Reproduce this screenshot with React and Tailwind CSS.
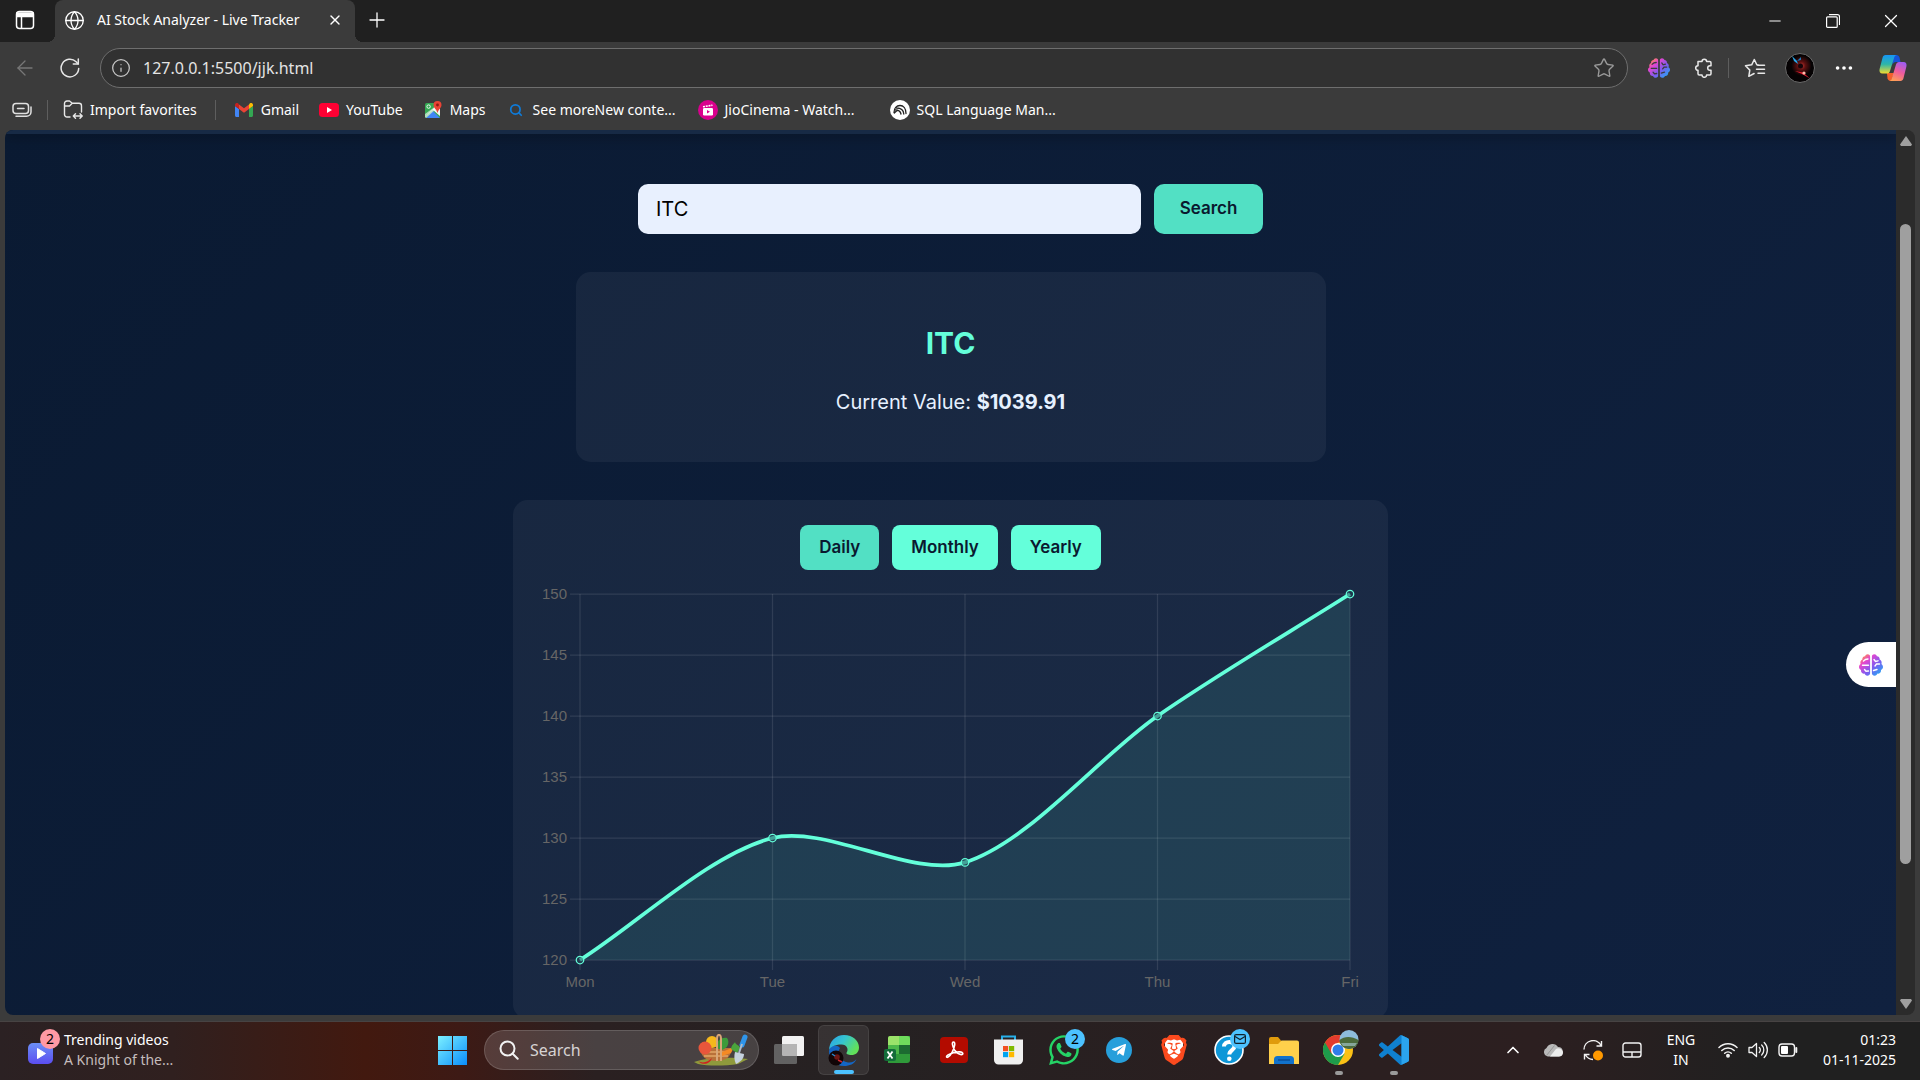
import { useState } from 'react';
import { ArrowLeft, ChevronUp, Ellipsis, Globe, Info, Minus, Plus, Search, Star, X } from 'lucide-react';
import { FaBrain, FaWhatsapp, FaTelegramPlane } from 'react-icons/fa';
import { SiBrave } from 'react-icons/si';

const ranges = {
  Daily: { labels: ['Mon', 'Tue', 'Wed', 'Thu', 'Fri'], values: [120, 130, 128, 140, 150] },
  Monthly: { labels: ['Jan', 'Feb', 'Mar', 'Apr', 'May'], values: [122, 126, 135, 131, 145] },
  Yearly: { labels: ['2021', '2022', '2023', '2024', '2025'], values: [120, 124, 138, 142, 149] },
};

/* ---------- chart ---------- */

const AREA = { left: 42, right: 812, top: 12, bottom: 378 };
const TICKS = [150, 145, 140, 135, 130, 125, 120];

const toY = (v) => AREA.bottom - ((v - 120) / 30) * (AREA.bottom - AREA.top);
const clampY = (y) => Math.min(AREA.bottom, Math.max(AREA.top, y));

function buildCurve(points, tension = 0.3) {
  const ctrl = points.map((p, i) => {
    const prev = points[i - 1] || p;
    const next = points[i + 1] || p;
    const d01 = Math.hypot(p.x - prev.x, p.y - prev.y);
    const d12 = Math.hypot(next.x - p.x, next.y - p.y);
    const a = (tension * d01) / (d01 + d12);
    const b = (tension * d12) / (d01 + d12);
    return {
      inX: p.x - a * (next.x - prev.x),
      inY: clampY(p.y - a * (next.y - prev.y)),
      outX: p.x + b * (next.x - prev.x),
      outY: clampY(p.y + b * (next.y - prev.y)),
    };
  });
  return points
    .map((p, i) => {
      if (i === 0) return `M${p.x} ${p.y}`;
      const c0 = ctrl[i - 1];
      const c1 = ctrl[i];
      return `C${c0.outX} ${c0.outY} ${c1.inX} ${c1.inY} ${p.x} ${p.y}`;
    })
    .join(' ');
}

function StockChart({ labels, values }) {
  const step = (AREA.right - AREA.left) / (values.length - 1);
  const points = values.map((v, i) => ({ x: AREA.left + i * step, y: toY(v) }));
  const line = buildCurve(points);

  return (
    <svg viewBox="0 0 825 412" className="w-full block mt-3" role="img" aria-label="Stock price chart">
      <g stroke="#ffffff" strokeOpacity="0.1" strokeWidth="1.25">
        {TICKS.map((t) => (
          <line key={t} x1={AREA.left - 10} x2={AREA.right} y1={toY(t)} y2={toY(t)} />
        ))}
        {points.map((p) => (
          <line key={p.x} x1={p.x} x2={p.x} y1={AREA.top} y2={AREA.bottom + 10} />
        ))}
      </g>
      <path d={`${line} L${AREA.right} ${AREA.bottom} L${AREA.left} ${AREA.bottom} Z`} fill="#64ffda" fillOpacity="0.1" />
      <path d={line} fill="none" stroke="#64ffda" strokeWidth="3.75" />
      {points.map((p) => (
        <circle key={p.x} cx={p.x} cy={p.y} r="3.75" fill="#1f4556" fillOpacity="0.5" stroke="#64ffda" strokeWidth="1.25" />
      ))}
      <g className="font-['Liberation_Sans',sans-serif] text-[15px]" fill="#666666">
        {TICKS.map((t) => (
          <text key={t} x="29" y={toY(t) + 5} textAnchor="end">{t}</text>
        ))}
        {points.map((p, i) => (
          <text key={p.x} x={p.x} y="405" textAnchor="middle">{labels[i]}</text>
        ))}
      </g>
    </svg>
  );
}

/* ---------- browser icons ---------- */

function BrainIcon({ className }) {
  return (
    <span className={className}>
      <svg width="0" height="0" className="absolute">
        <linearGradient id="brain" x1="0" y1="0" x2="1" y2="1">
          <stop offset="0.080" stopColor="#ff9a3c" />
          <stop offset="0.300" stopColor="#e545cf" />
          <stop offset="0.600" stopColor="#7d5cf0" />
          <stop offset="0.900" stopColor="#2aa4f4" />
        </linearGradient>
      </svg>
      <FaBrain className="size-full fill-[url(#brain)]" />
      <svg viewBox="0 0 24 24" className="absolute inset-0 size-full" fill="none" stroke="currentColor" strokeWidth="1.400" strokeLinecap="round">
        <path d="M12 2v20M3.500 12.300h6M4.500 8l2-1.500 2.500-.500M5.500 16.500l1.500 1.800 2.500-.300M20.500 11h-3l-1.500 2M15 6.500l1.500 2 2.500-.700M14.500 17.500l3.500-1" />
      </svg>
    </span>
  );
}

function TabActionsIcon() {
  return (
    <svg viewBox="0 0 20 20" className="size-5" fill="none" stroke="#fff" strokeWidth="1.5">
      <rect x="1.5" y="1.5" width="17" height="17" rx="3" />
      <path d="M2 3h16v3.500H2z" fill="#fff" />
      <path d="M6.500 6v12" />
    </svg>
  );
}

function ReloadIcon() {
  return (
    <svg viewBox="0 0 20 20" className="size-5" fill="none" stroke="#e6e6e6" strokeWidth="1.5" strokeLinecap="round">
      <path d="M18.700 10.500a8.800 8.800 0 1 1-2.600-6.700l1.900 1.900" />
      <path d="M18.300 1v5h-5" />
    </svg>
  );
}

function PuzzleIcon() {
  return (
    <svg viewBox="0 0 20 20" className="size-5" fill="none" stroke="#e8e8e8" strokeWidth="1.5" strokeLinejoin="round">
      <path d="M4 3.500h4a2.300 2.300 0 0 1 4.600 0h3.200a1.200 1.200 0 0 1 1.200 1.200v3h-1a2.300 2.300 0 0 0 0 4.600h1v3.500a1.200 1.200 0 0 1-1.200 1.200h-3.200a2.300 2.300 0 0 1-4.600 0H5.200A1.200 1.200 0 0 1 4 15.800v-3.500a2.300 2.300 0 0 1 0-4.600z" />
    </svg>
  );
}

function FavoritesIcon() {
  return (
    <svg viewBox="0 0 22 20" className="w-[22px] h-5" fill="none" stroke="#e8e8e8" strokeWidth="1.5" strokeLinecap="round" strokeLinejoin="round">
      <path d="M14 7 12.800 6.800 10.300 1.500 7.700 6.800 1.500 7.800l4.300 4.300-1 6.200 5.300-2.800" />
      <path d="M14 7.200h6.500M12.500 11.200h8M14 15.200h6.500" />
    </svg>
  );
}

function Avatar() {
  return (
    <svg viewBox="0 0 30 30" className="size-[30px]">
      <defs>
        <radialGradient id="avatarRed" cx="0.55" cy="0.42" r="0.35">
          <stop offset="0" stopColor="#c03430" />
          <stop offset="0.4" stopColor="#5b1010" />
          <stop offset="1" stopColor="#050203" />
        </radialGradient>
      </defs>
      <circle cx="15" cy="15" r="14.500" fill="url(#avatarRed)" stroke="#6b6b6b" />
      <path d="M7 3 12 8l1 3-4-3z" fill="#28a6e8" />
      <path d="m16 4-4 4 4-1z" fill="#1c78b8" />
      <path d="m10 18 8 1.500 7 6-8-4.500z" fill="#e31b30" />
      <circle cx="19" cy="20" r="1.600" fill="#ffb9a8" />
      <circle cx="15.500" cy="13" r="2.500" fill="#12060a" />
    </svg>
  );
}

function CopilotIcon() {
  return (
    <svg viewBox="0 0 28 26" className="w-7 h-[26px]">
      <defs>
        <linearGradient id="copA" x1="0" y1="0" x2="0" y2="1">
          <stop offset="0" stopColor="#1695f5" />
          <stop offset="0.5" stopColor="#2db6a8" />
          <stop offset="1" stopColor="#f2dc2f" />
        </linearGradient>
        <linearGradient id="copB" x1="0.700" y1="0" x2="0.300" y2="1">
          <stop offset="0" stopColor="#a05cf0" />
          <stop offset="0.5" stopColor="#ef5c9c" />
          <stop offset="1" stopColor="#ff9f55" />
        </linearGradient>
      </defs>
      <path d="M13 0h4.500c1.500 0 2.500 1 3 2.500L21.500 7H17c-2 0-3 1-3.500 3z" fill="#1553d8" />
      <path d="M8 18h7l-3 8c-2 0-3-1-3.500-2.500z" fill="#f4602c" />
      <path d="M6.500 0H18c-1.500 0-2.300 1-2.800 2.500L11 16c-.5 1.700-1.500 2.500-3 2.500H3.500C1 18.500 0 16.500.6 14l3-11.500C4 1 5 0 6.500 0z" fill="url(#copA)" />
      <path d="M21.500 26H10c1.500 0 2.300-1 2.800-2.500L17 9.500C17.500 8 18.500 7 20 7h4.500c2.500 0 3.500 2 2.900 4.500l-3 12C24 25 23 26 21.500 26z" fill="url(#copB)" />
    </svg>
  );
}

function SidebarCollapseIcon() {
  return (
    <svg viewBox="0 0 20 16" className="w-5 h-4" fill="none" stroke="#e0e0e0" strokeWidth="1.500" strokeLinecap="round">
      <rect x="1" y="1.500" width="15.500" height="10" rx="3" />
      <path d="M5.500 6.500h6.500M4 14.300h10.500A4.500 4.500 0 0 0 19 10V5" />
    </svg>
  );
}

function ImportFolderIcon() {
  return (
    <svg viewBox="0 0 20 20" className="size-5" fill="none" stroke="#e8e8e8" strokeWidth="1.400" strokeLinecap="round" strokeLinejoin="round">
      <path d="M7 17H4a2.500 2.500 0 0 1-2.500-2.500V3.500A2.500 2.500 0 0 1 4 1h2.500l2.800 2.300H16a2.500 2.500 0 0 1 2.500 2.500V12M1.500 6h5L9 3.500" />
      <path d="M10.500 16h8.500M12.500 13.800 10.300 16l2.200 2.200M17 13.800l2.200 2.200-2.200 2.200" />
    </svg>
  );
}

function GmailIcon() {
  return (
    <svg viewBox="0 0 18 14" className="w-[18px] h-[14px]">
      <path d="M0 3v9.500C0 13.300.7 14 1.500 14H4V6z" fill="#4285f4" />
      <path d="M14 6v8h2.500c.8 0 1.500-.7 1.500-1.500V3z" fill="#34a853" />
      <path d="M14 1.500V6l4-3V2c0-1.800-2-2.700-3.300-1.600z" fill="#fbbc04" />
      <path d="M4 6V1.500l5 3.700 5-3.700V6L9 9.700z" fill="#ea4335" />
      <path d="M0 2v1l4 3V1.500L3.300.4C2-.7 0 .2 0 2z" fill="#c5221f" />
    </svg>
  );
}

function YouTubeIcon() {
  return (
    <svg viewBox="0 0 20 14" className="w-5 h-[14px]">
      <rect width="20" height="14" rx="3.500" fill="#ff0033" />
      <path d="M8 4v6l5-3z" fill="#fff" />
    </svg>
  );
}

function MapsIcon() {
  return (
    <svg viewBox="0 0 18 18" className="size-[18px]">
      <rect x="1" y="2" width="15" height="15" rx="1.500" fill="#34a853" />
      <path d="M1 16 14 3l2 2v10L9 9z" fill="#f1f3f4" />
      <path d="M2 17 9 10l7 7z" fill="#4285f4" />
      <path d="M1 13v3l1 1L16 4.500V2z" fill="#fff" opacity="0.600" />
      <circle cx="4.600" cy="5.600" r="1.700" fill="none" stroke="#fff" strokeWidth="0.900" />
      <path d="M13.500 0A4 4 0 0 1 17.500 4c0 3-3 4-4 8-1-4-4-5-4-8a4 4 0 0 1 4-4z" fill="#ea4335" />
      <circle cx="13.500" cy="4" r="1.400" fill="#8c1a12" />
    </svg>
  );
}

function JioCinemaIcon() {
  return (
    <svg viewBox="0 0 20 20" className="size-5">
      <circle cx="10" cy="10" r="10" fill="#d9008d" />
      <rect x="5" y="8" width="10" height="7.500" rx="1.200" fill="#fff" />
      <path d="m5 6.800 9.500-1.600" stroke="#fff" strokeWidth="1.600" strokeDasharray="2 0.800" />
      <path d="M9 10v3.600l3-1.800z" fill="#d9008d" />
    </svg>
  );
}

function SqlIcon() {
  return (
    <svg viewBox="0 0 20 20" className="size-5" fill="none" stroke="#222" strokeWidth="1.300" strokeLinecap="round">
      <circle cx="10" cy="10" r="10" fill="#fff" stroke="none" />
      <path d="M4 12.500C4 8 6.500 5.500 10 5.500s6 3 6 8M6.500 8c4 0 7 2 7.300 6M5.500 10c3 0 5 1.500 5.500 4M4.300 13l2.700-2.500" />
    </svg>
  );
}

/* ---------- taskbar icons ---------- */

function WindowsIcon() {
  return (
    <svg viewBox="0 0 29 29" className="size-[29px]">
      <defs>
        <linearGradient id="win" x1="0" y1="0" x2="29" y2="29" gradientUnits="userSpaceOnUse">
          <stop offset="0" stopColor="#7cf0ff" />
          <stop offset="1" stopColor="#0a8dfb" />
        </linearGradient>
      </defs>
      <path d="M0 0h14v14H0zM15 0h14v14H15zM0 15h14v14H0zM15 15h14v14H15z" fill="url(#win)" />
    </svg>
  );
}

function VideoWidgetIcon() {
  return (
    <svg viewBox="0 0 32 34" className="w-8 h-[34px]">
      <defs>
        <linearGradient id="video" x1="0" y1="0" x2="0" y2="1">
          <stop offset="0" stopColor="#6b8ff5" />
          <stop offset="1" stopColor="#5b4df0" />
        </linearGradient>
      </defs>
      <rect x="0" y="12" width="25" height="21" rx="5" fill="url(#video)" />
      <path d="M9.500 17.500v10l8-5z" fill="#fff" stroke="#fff" strokeLinejoin="round" />
    </svg>
  );
}

function GardenBasket() {
  return (
    <svg viewBox="0 0 56 32" className="w-14 h-8">
      <path d="M0 28c14-5 38-5 54-3l-10 5c-14 2-30 2-40 0z" fill="#8f9a3c" />
      <path d="M6 14h32c-1 9-6 13-16 13S7 23 6 14z" fill="#b9713a" />
      <path d="M8 18h28M10 22h24" stroke="#e2a566" strokeWidth="1.500" />
      <circle cx="18" cy="8" r="6" fill="#f6b81c" />
      <circle cx="11" cy="14" r="6.500" fill="#e8563b" />
      <path d="M22 14c0-8 6-11 11-10 3 4 1 10-5 12z" fill="#3c9a3a" />
      <path d="m28 18 12-5-3 6-9 3z" fill="#f58a24" />
      <path d="M37 15c1-5 3-5 4-7 1 4 4 2 5 6l-3 5z" fill="#4aa53c" />
      <path d="M23 27V5c0-6 4-5 4 0v22" fill="none" stroke="#d8a678" strokeWidth="2" />
      <path d="M4 27c5 3 10 1 14-3-2 6-9 8-14 3z" fill="#d11f1f" />
      <path d="m51 3-3 8" stroke="#2f95ea" strokeWidth="5" strokeLinecap="round" />
      <path d="m48 10-3 9" stroke="#aebccb" strokeWidth="2" />
      <path d="m41 18 9 2c0 5-4 8-8 10-2-4-2-8-1-12z" fill="#c6d2de" />
    </svg>
  );
}

function TaskViewIcon() {
  return (
    <svg viewBox="0 0 30 28" className="w-[30px] h-7">
      <rect x="8" y="0" width="22" height="20" rx="1.500" fill="#f2f2f2" />
      <rect x="0" y="8" width="23" height="20" rx="1.500" fill="#6d6d6d" fillOpacity="0.850" />
      <path d="M8 8h15v12H9.500A1.500 1.500 0 0 1 8 18.500z" fill="#b5b5b5" />
    </svg>
  );
}

function EdgeIcon() {
  return (
    <svg viewBox="0 0 32 32" className="size-8">
      <defs>
        <linearGradient id="edgeTop" x1="0" y1="0" x2="1" y2="0.500">
          <stop offset="0" stopColor="#2b9fe8" />
          <stop offset="0.500" stopColor="#35c5cf" />
          <stop offset="1" stopColor="#62e05a" />
        </linearGradient>
      </defs>
      <path d="M12 14c-4 6 0 13 8 14.500 4 .5 7-1.500 8.500-3.500-2 5-7 7-12.500 7C7 32 1 25 1 17c1-6 7-7 11-3z" fill="#1466c4" />
      <path d="M1 17C1 7 8 1 16 1c9 0 15 6 15 12.500 0 5-3.500 7.500-7.500 7.500-3.500 0-5.500-1-5-2.200 2.500-3 .500-8.300-5-8.300C7 10.500 1 13 1 17z" fill="url(#edgeTop)" />
      <circle cx="8" cy="24" r="7.500" fill="#110507" />
      <circle cx="9" cy="23" r="2.800" fill="#6d1614" />
      <path d="m4 20 3 2" stroke="#2b86c8" strokeWidth="1.500" />
      <path d="m10 26 4 2" stroke="#d2252f" strokeWidth="1.500" />
    </svg>
  );
}

function ExcelIcon() {
  return (
    <svg viewBox="0 0 30 28" className="w-[30px] h-7">
      <path d="M7 0h19v24a3 3 0 0 1-3 3H4V3a3 3 0 0 1 3-3z" fill="#2f9a3a" />
      <path d="M6 0h9v9H4V2a2 2 0 0 1 2-2z" fill="#9be36a" />
      <path d="M15 0h8a3 3 0 0 1 3 3v6H15z" fill="#6fdc5c" />
      <path d="M4 9h11v9H4z" fill="#4cb84a" />
      <path d="M15 9h11v9H15z" fill="#1c6b31" />
      <rect x="0" y="13" width="12" height="12" rx="2" fill="#136c3a" />
      <path d="m3.500 15.500 5 7M8.500 15.500l-5 7" stroke="#fff" strokeWidth="1.800" />
    </svg>
  );
}

function AcrobatIcon() {
  return (
    <svg viewBox="0 0 28 28" className="size-7">
      <rect y="1" width="28" height="26" rx="4" fill="#b30b00" />
      <path d="M13.500 6c-2 0-1 4.500 1 8 2 3 5.500 5 7.500 4.500 1.500-.500 1-2.500-2-2.600-4-.200-8.500 1-12 3-2.500 1.600-1.500 3 0 2.200C11 19.500 14 13.500 14.700 9c.200-1.800-.200-3-1.200-3z" fill="none" stroke="#fff" strokeWidth="1.600" />
    </svg>
  );
}

function StoreIcon() {
  return (
    <svg viewBox="0 0 29 30" className="w-[29px] h-[30px]">
      <path d="M8 5V1.500h13V5" fill="none" stroke="#28b0ea" strokeWidth="2" />
      <path d="M0 4.500h29V25a4.500 4.500 0 0 1-4.500 4.500h-20A4.500 4.500 0 0 1 0 25z" fill="#f0f0f0" />
      <path d="M9 11h5.200v5.200H9z" fill="#f25022" />
      <path d="M15 11h5.200v5.200H15z" fill="#7fba00" />
      <path d="M9 17h5.200v5.200H9z" fill="#00a4ef" />
      <path d="M15 17h5.200v5.200H15z" fill="#ffb900" />
    </svg>
  );
}

function HelpIcon() {
  return (
    <svg viewBox="0 0 30 30" className="size-[30px]" fill="none">
      <circle cx="15" cy="15" r="14" fill="#0e97d8" stroke="#fff" strokeWidth="1.600" />
      <path d="M10 11.500c0-6 10.500-6 10.500-.300 0 4-5.200 3.800-5.200 8.300" stroke="#fff" strokeWidth="4" />
      <circle cx="15.300" cy="23.800" r="2.300" fill="#fff" />
    </svg>
  );
}

function FolderIcon() {
  return (
    <svg viewBox="0 0 30 27" className="w-[30px] h-[27px]">
      <path d="M0 2a2 2 0 0 1 2-2h7l3 3.500V9H0z" fill="#e09b0c" />
      <path d="M0 7h9l3.500-3.500H28A2 2 0 0 1 30 5.500V27H0z" fill="#ffd04b" />
      <path d="M5 27v-4.500A3.500 3.500 0 0 1 8.500 19h13a3.500 3.500 0 0 1 3.500 3.500V27z" fill="#1272cc" />
      <path d="M9 23h12" stroke="#0a4d95" strokeWidth="1.400" />
    </svg>
  );
}

function ChromeIcon() {
  return (
    <svg viewBox="0 0 36 36" className="size-9">
      <circle cx="15" cy="20" r="15" fill="#fbc116" />
      <path d="M2 12.500A15 15 0 0 0 15 35l6.500-11.200L15 20z" fill="#1e9b4b" />
      <path d="M2 12.500A15 15 0 0 1 28 12.500H15L8.500 23.800z" fill="#e33b2e" />
      <circle cx="15" cy="20" r="7" fill="#fff" />
      <circle cx="15" cy="20" r="5.500" fill="#2f7de9" />
      <circle cx="26" cy="9.500" r="9.500" fill="#8ebcdc" />
      <path d="M16.500 10c5-4 12-4 19 0-.300 5.500-4.500 9-9.500 9s-9.200-3.500-9.500-9z" fill="#4c6b3c" />
      <path d="M18 13h16l-2 3H20z" fill="#86a79a" />
    </svg>
  );
}

function VsCodeIcon() {
  return (
    <svg viewBox="0 0 24 24" className="size-[30px]">
      <path
        d="M23.150 2.587L18.210.21a1.494 1.494 0 0 0-1.705.29l-9.460 8.630-4.120-3.128a.999.999 0 0 0-1.276.057L.327 7.261A1 1 0 0 0 .326 8.740L3.899 12 .326 15.260a1 1 0 0 0 .001 1.479L1.650 17.940a.999.999 0 0 0 1.276.057l4.120-3.128 9.460 8.630a1.492 1.492 0 0 0 1.704.29l4.942-2.377A1.500 1.500 0 0 0 24 20.060V3.939a1.500 1.500 0 0 0-.85-1.352zm-5.146 14.861L10.826 12l7.178-5.448v10.896z"
        fill="#0f80cf"
      />
      <path d="M18 .2 23.150 2.587A1.500 1.500 0 0 1 24 3.939V20.060a1.500 1.500 0 0 1-.85 1.352L18 23.800z" fill="#2ba4ee" />
    </svg>
  );
}

function CloudIcon() {
  return (
    <svg viewBox="0 0 20 14" className="w-5 h-[14px]">
      <path d="M5 13.500A4.500 4.500 0 0 1 3.500 5 6.500 6.500 0 0 1 15 4a4.800 4.800 0 0 1 1 9.500z" fill="#b9b9b9" />
      <path d="M7 13.500 13 6a4.800 4.800 0 0 1 7 3c0 3-1.500 4.500-4 4.500z" fill="#ededed" />
      <path d="m3.500 12.500 8-10" stroke="#8b8b8b" strokeWidth="0.800" />
    </svg>
  );
}

function SyncIcon() {
  return (
    <svg viewBox="0 0 21 21" className="size-[21px]" fill="none" stroke="#f2f2f2" strokeWidth="1.400">
      <path d="M1 9.500A9 9 0 0 1 18 5.500M18.500 1v5h-5M10 19.500A9 9 0 0 1 2.500 15M1.500 19.500v-5h5" />
      <circle cx="15" cy="15.500" r="5" fill="#ff9900" stroke="none" />
    </svg>
  );
}

function TouchpadIcon() {
  return (
    <svg viewBox="0 0 20 16" className="w-5 h-4" fill="none" stroke="#f2f2f2" strokeWidth="1.400">
      <rect x="1" y="1" width="18" height="14" rx="2.500" />
      <path d="M1 10h18M10 10v5" />
    </svg>
  );
}

function WifiIcon() {
  return (
    <svg viewBox="0 0 20 16" className="w-5 h-4" fill="none" stroke="#f2f2f2" strokeWidth="1.500" strokeLinecap="round">
      <path d="M1 5.500a12.500 12.500 0 0 1 18 0M3.800 8.500a8.700 8.700 0 0 1 12.400 0M6.700 11.300a4.700 4.700 0 0 1 6.600 0" />
      <circle cx="10" cy="13.700" r="1.200" fill="#f2f2f2" />
    </svg>
  );
}

function VolumeIcon() {
  return (
    <svg viewBox="0 0 20 18" className="w-5 h-[18px]" fill="none" stroke="#f2f2f2" strokeWidth="1.300" strokeLinecap="round" strokeLinejoin="round">
      <path d="M1 6.500v5h3l4.500 4v-13l-4.500 4z" />
      <path d="M11.300 6.500a3.500 3.500 0 0 1 0 5M13.700 4a7 7 0 0 1 0 10M16.200 1.500a10.500 10.500 0 0 1 0 15" />
    </svg>
  );
}

function BatteryIcon() {
  return (
    <svg viewBox="0 0 20 14" className="w-5 h-[14px]" fill="none" stroke="#f2f2f2" strokeWidth="1.400">
      <rect x="1" y="1" width="15.500" height="12" rx="3" />
      <rect x="3" y="3" width="7" height="8" rx="1" fill="#fff" stroke="none" />
      <path d="M18.300 5v4" strokeWidth="2" strokeLinecap="round" />
    </svg>
  );
}

/* ---------- browser chrome ---------- */

function TitleBar() {
  return (
    <div className="h-[42px] bg-[#202020] flex items-stretch">
      <button aria-label="Tab actions" className="w-[55px] pb-0.5 pr-1.5 flex items-center justify-center">
        <TabActionsIcon />
      </button>
      <div className="relative w-[300px] bg-[#3b3b3b] rounded-t-lg flex items-center pl-[9px] pr-3 pb-0.5">
        <span className="absolute -left-2 bottom-0 size-2 bg-[radial-gradient(circle_at_0_0,#202020_8px,#3b3b3b_8px)]" />
        <span className="absolute -right-2 bottom-0 size-2 bg-[radial-gradient(circle_at_100%_0,#202020_8px,#3b3b3b_8px)]" />
        <Globe className="size-[21px] mr-3" strokeWidth={1.5} />
        <span className="flex-1 text-sm whitespace-nowrap">AI Stock Analyzer - Live Tracker</span>
        <button aria-label="Close tab">
          <X className="size-4" strokeWidth={2} />
        </button>
      </div>
      <button aria-label="New tab" className="w-11 pb-0.5 flex items-center justify-center">
        <Plus className="size-6" strokeWidth={1.300} />
      </button>
      <div className="ml-auto flex">
        <button aria-label="Minimize" className="w-[58px] flex items-center justify-center">
          <Minus className="size-[18px]" strokeWidth={1.300} />
        </button>
        <button aria-label="Restore" className="w-[58px] flex items-center justify-center">
          <svg viewBox="0 0 14 14" className="size-[14px]" fill="none" stroke="#fff" strokeWidth="1.200">
            <rect x="0.600" y="2.800" width="10.600" height="10.600" rx="1" />
            <path d="M3 .7h8.500a2 2 0 0 1 2 2V11" />
          </svg>
        </button>
        <button aria-label="Close" className="w-[58px] flex items-center justify-center">
          <X className="size-[22px]" strokeWidth={1.300} />
        </button>
      </div>
    </div>
  );
}

function Toolbar() {
  return (
    <div className="h-[52px] flex items-center px-[13px]">
      <button aria-label="Back" className="w-6 flex justify-center">
        <ArrowLeft className="size-6 text-[#777777]" strokeWidth={1.300} />
      </button>
      <button aria-label="Reload" className="ml-[23px] mr-5">
        <ReloadIcon />
      </button>
      <div className="flex-1 h-10 flex items-center bg-[#313131] border border-[#6e6e6e] rounded-full pl-[10px] pr-3">
        <Info className="size-5 text-[#c8c8c8]" strokeWidth={1.500} />
        <input
          aria-label="Address"
          className="flex-1 ml-3 text-base bg-transparent outline-none text-[#e4e4e4]"
          defaultValue="127.0.0.1:5500/jjk.html"
        />
        <Star className="size-[22px] text-[#9a9a9a]" strokeWidth={1.500} />
      </div>
      <button aria-label="AI assistant" className="ml-5 text-[#3b3b3b]">
        <BrainIcon className="relative block size-[22px]" />
      </button>
      <button aria-label="Extensions" className="ml-6">
        <PuzzleIcon />
      </button>
      <span className="ml-[14px] w-px h-5 bg-[#5e5e5e]" />
      <button aria-label="Favorites" className="ml-[15px]">
        <FavoritesIcon />
      </button>
      <button aria-label="Profile" className="ml-[19px]">
        <Avatar />
      </button>
      <button aria-label="More" className="ml-[18px]">
        <Ellipsis className="size-[22px]" />
      </button>
      <button aria-label="Copilot" className="ml-6">
        <CopilotIcon />
      </button>
    </div>
  );
}

function Bookmark({ icon, label, wide }) {
  return (
    <a href="#" className="flex items-center gap-[7px] whitespace-nowrap">
      <span className="w-5 flex justify-center">{icon}</span>
      <span className={wide ? 'w-[145px]' : ''}>{label}</span>
    </a>
  );
}

function BookmarksBar() {
  return (
    <nav className="h-9 pb-1 pl-3 flex items-center text-sm">
      <button aria-label="Collapse">
        <SidebarCollapseIcon />
      </button>
      <span className="mx-[15px] w-px h-5 bg-[#5e5e5e]" />
      <Bookmark icon={<ImportFolderIcon />} label="Import favorites" />
      <span className="mx-[18px] w-px h-5 bg-[#5e5e5e]" />
      <div className="flex items-center gap-5">
        <Bookmark icon={<GmailIcon />} label="Gmail" />
        <Bookmark icon={<YouTubeIcon />} label="YouTube" />
        <Bookmark icon={<MapsIcon />} label="Maps" />
        <Bookmark icon={<Search className="size-[14px] text-[#0f7bd8]" strokeWidth={3} />} label="See moreNew conte..." wide />
        <Bookmark icon={<JioCinemaIcon />} label="JioCinema - Watch..." wide />
        <Bookmark icon={<SqlIcon />} label="SQL Language Man..." wide />
      </div>
    </nav>
  );
}

function Scrollbar() {
  return (
    <div className="w-[19px] shrink-0 bg-[#2b2b2b] flex flex-col items-center justify-between py-[6px]">
      <svg viewBox="0 0 12 10" className="w-3 h-[10px]"><path d="M6 0 12 8.500 11 10H1L0 8.500z" fill="#9f9f9f" /></svg>
      <div className="w-[11px] flex-1 flex flex-col">
        <div className="flex-[78]" />
        <div className="flex-[640] rounded-full bg-[#9f9f9f]" />
        <div className="flex-[135]" />
      </div>
      <svg viewBox="0 0 12 10" className="w-3 h-[10px]"><path d="M6 10 12 1.500 11 0H1L0 1.500z" fill="#9f9f9f" /></svg>
    </div>
  );
}

/* ---------- page ---------- */

function StockPage() {
  const [range, setRange] = useState('Daily');

  return (
    <div className="relative flex-1 overflow-hidden bg-linear-135 from-[#0a1a32] to-[#10213f] font-['Inter',sans-serif] text-[#e6f1ff]">
      <div className="h-1 bg-[#172a45] shadow-[0_2px_12px_rgba(0,0,0,0.5)]" />
      <div className="flex flex-col items-center pt-[50px] gap-[38px]">
        <form className="flex gap-[13px]" onSubmit={(e) => e.preventDefault()}>
          <input
            aria-label="Stock symbol"
            defaultValue="ITC"
            className="w-[503px] h-[50px] rounded-[10px] bg-[#e8f0fe] px-[18px] text-xl text-black outline-none"
          />
          <button className="w-[109px] h-[50px] rounded-[10px] bg-[#52e0c4] text-[#0a192f] text-[17px] font-semibold">
            Search
          </button>
        </form>

        <section className="w-full max-w-[750px] rounded-[15px] bg-white/5 pt-12 pb-11 text-center">
          <h2 className="text-3xl leading-[46px] font-bold text-[#64ffda]">ITC</h2>
          <p className="mt-5 text-xl leading-8">
            Current Value: <strong className="font-bold">$1039.91</strong>
          </p>
        </section>

        <section className="w-full max-w-[875px] rounded-[15px] bg-white/5 p-[25px]">
          <div className="flex justify-center gap-[13px]">
            {Object.keys(ranges).map((name) => (
              <button
                key={name}
                onClick={() => setRange(name)}
                className={`h-[45px] px-[19px] rounded-lg text-[17px] font-semibold text-[#0a192f] ${
                  name === range ? 'bg-[#52e0c4]' : 'bg-[#64ffda]'
                }`}
              >
                {name}
              </button>
            ))}
          </div>
          <StockChart {...ranges[range]} />
        </section>
      </div>

      <button aria-label="Open assistant" className="absolute right-0 top-[512px] w-[50px] h-[45px] rounded-l-full bg-white text-white flex items-center justify-center">
        <BrainIcon className="relative block size-6" />
      </button>
    </div>
  );
}

/* ---------- taskbar ---------- */

function TaskIcon({ children, label, active, running, badge }) {
  return (
    <button
      aria-label={label}
      className={`relative w-[51px] h-[50px] mx-0.5 flex items-center justify-center rounded-md ${
        active ? 'bg-white/8 border border-white/8' : ''
      }`}
    >
      {children}
      {badge && (
        <span className="absolute top-1 right-1 size-5 rounded-full bg-[#4cc2ff] text-black text-sm leading-5 text-center flex items-center justify-center">
          {badge}
        </span>
      )}
      {active && <span className="absolute bottom-0 w-5 h-1 rounded-full bg-[#4cc2ff]" />}
      {running && <span className="absolute bottom-0 w-2 h-1 rounded-full bg-[#9a9a9a]" />}
    </button>
  );
}

function Taskbar() {
  return (
    <footer className="h-[59px] pb-0.5 flex items-center border-t border-[#474343] bg-[linear-gradient(90deg,#2b2123_0%,#30201f_9%,#42190f_19%,#3d1a15_24%,#2a2021_31%,#252122_45%,#2a1f20_64%,#2c1f20_80%,#202020_92%)]">
      <button className="w-[425px] pl-7 flex items-center gap-1 text-left text-sm leading-5">
        <span className="relative pb-1">
          <VideoWidgetIcon />
          <span className="absolute -top-0.5 right-0 size-5 rounded-full bg-[#ff99a4] text-black text-sm leading-5 text-center">2</span>
        </span>
        <span>
          <span className="block">Trending videos</span>
          <span className="block text-[#c4bcbc]">A Knight of the...</span>
        </span>
      </button>

      <button aria-label="Start" className="w-[55px] flex justify-center">
        <WindowsIcon />
      </button>
      <div className="w-[275px] h-10 ml-1 mr-0.5 pl-[14px] pr-2 flex items-center rounded-full border border-white/15 bg-white/15">
        <svg viewBox="0 0 20 20" className="size-5" fill="none" stroke="#f2f2f2" strokeWidth="2" strokeLinecap="round">
          <circle cx="8.500" cy="8.500" r="7" />
          <path d="m13.700 13.700 5 5" />
        </svg>
        <input
          aria-label="Search Windows"
          placeholder="Search"
          className="flex-1 min-w-0 ml-[11px] bg-transparent text-base outline-none placeholder:text-[#d6d3d3]"
        />
        <GardenBasket />
      </div>

      <TaskIcon label="Task view"><TaskViewIcon /></TaskIcon>
      <TaskIcon label="Edge" active><EdgeIcon /></TaskIcon>
      <TaskIcon label="Excel"><ExcelIcon /></TaskIcon>
      <TaskIcon label="Acrobat"><AcrobatIcon /></TaskIcon>
      <TaskIcon label="Store"><StoreIcon /></TaskIcon>
      <TaskIcon label="WhatsApp" badge="2"><FaWhatsapp className="size-[34px] text-[#25d366]" /></TaskIcon>
      <TaskIcon label="Telegram">
        <span className="size-[26px] rounded-full bg-[#279fdb] flex items-center justify-center">
          <FaTelegramPlane className="size-4 text-white" />
        </span>
      </TaskIcon>
      <TaskIcon label="Brave">
        <span className="relative flex">
          <span className="absolute inset-x-[6px] inset-y-1 rounded-b-full bg-white" />
          <SiBrave className="relative size-[30px] text-[#fb4a1e]" />
        </span>
      </TaskIcon>
      <TaskIcon
        label="Get help"
        badge={
          <svg viewBox="0 0 12 10" className="w-3 h-[10px]" fill="none" stroke="#10222e" strokeWidth="1.200">
            <rect x="0.600" y="0.600" width="10.800" height="8.800" rx="1.500" />
            <path d="m1 2.500 5 3 5-3" />
          </svg>
        }
      >
        <HelpIcon />
      </TaskIcon>
      <TaskIcon label="File Explorer"><FolderIcon /></TaskIcon>
      <TaskIcon label="Chrome" running><span className="pl-[5px] pb-[5px]"><ChromeIcon /></span></TaskIcon>
      <TaskIcon label="VS Code" running><VsCodeIcon /></TaskIcon>

      <div className="ml-auto pr-6 flex items-center text-sm leading-5">
        <ChevronUp className="size-5" strokeWidth={2} />
        <span className="ml-5"><CloudIcon /></span>
        <span className="ml-5"><SyncIcon /></span>
        <span className="ml-[18px]"><TouchpadIcon /></span>
        <div className="ml-[22px] w-[34px] text-center">
          <div>ENG</div>
          <div>IN</div>
        </div>
        <div className="ml-5 flex items-center gap-[10px]">
          <WifiIcon />
          <VolumeIcon />
          <BatteryIcon />
        </div>
        <div className="w-[98px] text-right whitespace-nowrap">
          <div>01:23</div>
          <div>01-11-2025</div>
        </div>
      </div>
    </footer>
  );
}

export default function App() {
  return (
    <div className="h-screen flex flex-col bg-[#3b3b3b] text-white font-['Noto_Sans','Open_Sans',sans-serif] overflow-hidden">
      <header>
        <TitleBar />
        <Toolbar />
        <BookmarksBar />
      </header>
      <main className="flex-1 min-h-0 mx-[5px] mb-[6px] flex rounded-lg overflow-hidden">
        <StockPage />
        <Scrollbar />
      </main>
      <Taskbar />
    </div>
  );
}
